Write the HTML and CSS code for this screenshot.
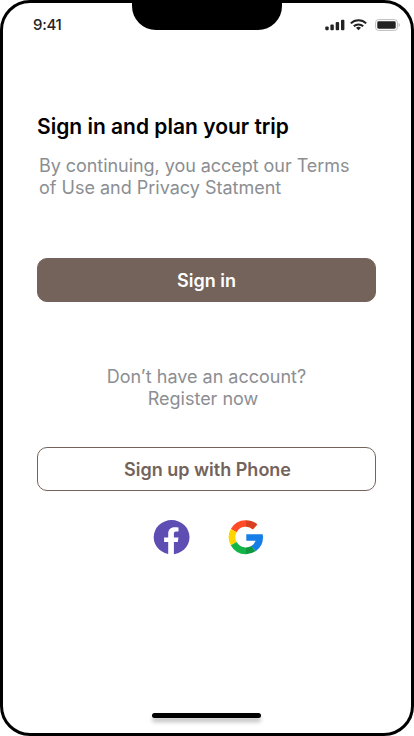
FILE: index.html
```html
<!DOCTYPE html>
<html lang="en">
<head>
<meta charset="utf-8">
<title>Sign in</title>
<link rel="stylesheet" href="styles.css">
</head>
<body>
<div class="phone">
  <div class="notch"></div>
  <header class="status">
    <span class="time">9:41</span>
    <svg class="status-icons" width="76" height="14" viewBox="0 0 76 14" aria-hidden="true">
      <g fill="#222">
        <rect x="0.3" y="8.6" width="3.4" height="3.6" rx="1"/>
        <rect x="5.4" y="6.5" width="3.4" height="5.7" rx="1"/>
        <rect x="10.7" y="4" width="3.4" height="8.2" rx="1"/>
        <rect x="16" y="1.8" width="3.4" height="10.4" rx="1"/>
      </g>
      <g fill="none" stroke="#222" stroke-width="2">
        <path d="M25.8 5.4a11 11 0 0 1 15.4 0"/>
        <path d="M28.8 8.3a6.8 6.8 0 0 1 9.4 0"/>
      </g>
      <path d="M33.5 12.3l-2.5-2.5a3.7 3.7 0 0 1 5 0z" fill="#222"/>
      <rect x="50.6" y="1.6" width="21.8" height="10.8" rx="3" fill="none" stroke="#bcbcbc" stroke-width="1"/>
      <rect x="52.3" y="3.3" width="18.4" height="7.4" rx="1.4" fill="#222"/>
      <path d="M73.6 5v4a2.2 2.2 0 0 0 0-4z" fill="#bcbcbc"/>
    </svg>
  </header>
  <main class="content">
    <h1 class="title">Sign in and plan your trip</h1>
    <p class="note terms"><span class="terms-lead">By continuing, you accept our Terms</span><br>of Use and Privacy Statment</p>
    <button class="button primary">Sign in</button>
    <p class="note register">Don’t have an account?<br><span class="register-link">Register now</span></p>
    <button class="button outline">Sign up with Phone</button>
    <div class="social">
      <svg width="36" height="35" viewBox="0 0 36 35" role="img" aria-label="Facebook">
        <ellipse cx="17.6" cy="17.2" rx="17.9" ry="17.1" fill="#5e4db2"/>
        <path d="M14.2 35V22.1h-4.1v-4.7h4.1v-3.5c0-4.5 2.5-6.7 6.4-6.7 1.5 0 2.8.1 3.9.3v4.1h-2.3c-2.2 0-2.3 1.2-2.3 2.8v3h4.6l-.7 4.7h-3.9V35z" fill="#fff"/>
      </svg>
      <svg width="34" height="35" viewBox="0 0 34 35" role="img" aria-label="Google">
        <g fill="none" stroke-width="6.7">
          <path d="M4.7 10.6A13.8 13.8 0 0 1 17 3.5" stroke="#ff4b26"/>
          <path d="M17 3.5A13.8 13.8 0 0 1 26.2 7" stroke="#d93f21"/>
          <path d="M4.7 23.7A13.8 13.8 0 0 1 4.7 10.6" stroke="#ffd500"/>
          <path d="M17 30.9A13.8 13.8 0 0 1 4.7 23.7" stroke="#13b548"/>
          <path d="M24.6 28.5A13.8 13.8 0 0 1 17 30.9" stroke="#0e9a3f"/>
        </g>
        <path d="M17.3 14.2H33.7A17.5 17.5 0 0 1 26.7 31.2L22.4 26A10.5 10.5 0 0 0 26.6 20.7H17.3z" fill="#167ee6"/>
      </svg>
    </div>
  </main>
  <div class="home-indicator"></div>
</div>
</body>
</html>
```

FILE: styles.css
```css
* { box-sizing: border-box; }

body {
  margin: 0;
  background: #fff;
  font-family: Inter, "Liberation Sans", sans-serif;
}

.phone {
  position: relative;
  display: flex;
  flex-direction: column;
  width: 414px;
  height: 736px;
  border: 3px solid #000;
  border-radius: 30px;
  background: #fff;
  overflow: hidden;
}

.notch {
  position: absolute;
  top: -3px;
  left: 129px;
  width: 150px;
  height: 30px;
  border-radius: 0 0 24px 24px;
  background: #000;
}

.status {
  display: flex;
  align-items: center;
  justify-content: space-between;
  height: 43px;
  padding: 0 10px 0 30px;
}

.time {
  color: #222;
  font-size: 15px;
  font-weight: 500;
  letter-spacing: -0.3px;
}

.content {
  display: flex;
  flex: 1;
  flex-direction: column;
  padding: 67px 35px 0 34px;
}

.title {
  margin: 0;
  color: #000;
  font-size: 21px;
  font-weight: 600;
  line-height: 28px;
  white-space: nowrap;
}

.note {
  margin: 0;
  color: #8b8e92;
  font-size: 18px;
  font-weight: 400;
  line-height: 22px;
  white-space: nowrap;
}

.terms { margin: 14px 0 0 2px; }

.terms-lead { letter-spacing: -0.05px; }

.register {
  margin-top: 64px;
  text-align: center;
}

.register-link { padding-right: 7px; }

.button {
  height: 44px;
  padding: 2px 0 0;
  border: 1px solid #73635b;
  border-radius: 10px;
  font: 600 18px/22px Inter, "Liberation Sans", sans-serif;
}

.primary {
  margin-top: 59px;
  background: #73635b;
  color: #fff;
}

.outline {
  margin-top: 37px;
  padding-left: 2px;
  background: #fff;
  color: #73635b;
}

.social {
  display: flex;
  gap: 39px;
  margin: 29px 0 0 116.5px;
}

.social svg { overflow: visible; }

.home-indicator {
  width: 109px;
  height: 5px;
  margin: 0 auto 15px 149px;
  border-radius: 3px;
  background: #000;
  box-shadow: 0 4px 4px rgba(0, 0, 0, 0.25);
}
```
